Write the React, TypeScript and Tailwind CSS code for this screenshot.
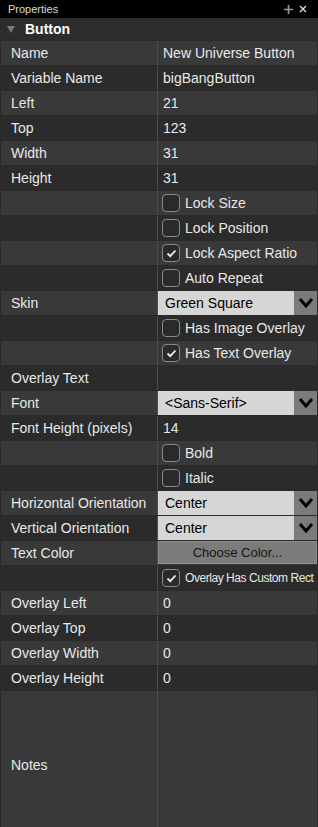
import React from 'react'

type Row =
  | { kind: 'text'; label: string; value?: string }
  | { kind: 'check'; label?: string; text: string; checked: boolean; small?: boolean }
  | { kind: 'select'; label: string; value: string }
  | { kind: 'button'; label: string; value: string }

const rows: Row[] = [
  { kind: 'text', label: 'Name', value: 'New Universe Button' },
  { kind: 'text', label: 'Variable Name', value: 'bigBangButton' },
  { kind: 'text', label: 'Left', value: '21' },
  { kind: 'text', label: 'Top', value: '123' },
  { kind: 'text', label: 'Width', value: '31' },
  { kind: 'text', label: 'Height', value: '31' },
  { kind: 'check', text: 'Lock Size', checked: false },
  { kind: 'check', text: 'Lock Position', checked: false },
  { kind: 'check', text: 'Lock Aspect Ratio', checked: true },
  { kind: 'check', text: 'Auto Repeat', checked: false },
  { kind: 'select', label: 'Skin', value: 'Green Square' },
  { kind: 'check', text: 'Has Image Overlay', checked: false },
  { kind: 'check', text: 'Has Text Overlay', checked: true },
  { kind: 'text', label: 'Overlay Text' },
  { kind: 'select', label: 'Font', value: '<Sans-Serif>' },
  { kind: 'text', label: 'Font Height (pixels)', value: '14' },
  { kind: 'check', text: 'Bold', checked: false },
  { kind: 'check', text: 'Italic', checked: false },
  { kind: 'select', label: 'Horizontal Orientation', value: 'Center' },
  { kind: 'select', label: 'Vertical Orientation', value: 'Center' },
  { kind: 'button', label: 'Text Color', value: 'Choose Color...' },
  { kind: 'check', text: 'Overlay Has Custom Rect', checked: true, small: true },
  { kind: 'text', label: 'Overlay Left', value: '0' },
  { kind: 'text', label: 'Overlay Top', value: '0' },
  { kind: 'text', label: 'Overlay Width', value: '0' },
  { kind: 'text', label: 'Overlay Height', value: '0' },
]

function Chevron() {
  return (
    <svg width="16" height="12" viewBox="0 0 16 12">
      <path d="M2 2 L8 9 L14 2" fill="none" stroke="#000" strokeWidth="3" />
    </svg>
  )
}

function Checkbox({ checked }: { checked: boolean }) {
  return (
    <div className="w-[18px] h-[18px] rounded-[4px] border border-[#8a8a8a] bg-[#2a2a2a] flex items-center justify-center shrink-0">
      {checked && (
        <svg width="11" height="9" viewBox="0 0 11 9">
          <path d="M1.5 4.5 L4.2 7.2 L9.5 1.5" fill="none" stroke="#f0f0f0" strokeWidth="1.8" />
        </svg>
      )}
    </div>
  )
}

function ValueCell({ row }: { row: Row }) {
  if (row.kind === 'select') {
    return (
      <div className="flex h-full w-full">
        <div className="flex-1 bg-[#d6d6d6] text-black flex items-center pl-[7px] pt-[1px]">{row.value}</div>
        <div className="w-[23px] bg-[#7b7b7b] flex items-center justify-center">
          <Chevron />
        </div>
      </div>
    )
  }
  if (row.kind === 'button') {
    return (
      <div className="h-[23px] w-full bg-[#7b7b7b] border border-[#8c8c8c] text-[#151515] text-[13px] flex items-center justify-center">
        {row.value}
      </div>
    )
  }
  if (row.kind === 'check') {
    return (
      <div className="flex items-center h-full pl-[4px] gap-[5px]">
        <Checkbox checked={row.checked} />
        <span className={row.small ? 'text-[12px] tracking-[-0.45px]' : 'pt-[1px]'}>{row.text}</span>
      </div>
    )
  }
  return <div className="flex items-center h-full pl-[5px] pt-[1px]">{row.value}</div>
}

export default function App() {
  return (
    <div
      className="w-[318px] h-[827px] bg-[#2a2a2a] text-[#e8e8e8] text-[14px] overflow-hidden flex flex-col"
      style={{ fontFamily: '"Liberation Sans", Arial, sans-serif' }}
    >
      <div className="h-[18px] bg-black flex items-center justify-between pl-[8px] pr-[11px] shrink-0">
        <span className="text-[11px] text-[#dcdcdc]">Properties</span>
        <div className="flex items-center gap-[6px]">
          <svg width="9" height="9" viewBox="0 0 9 9">
            <path d="M4.5 0 V9 M0 4.5 H9" stroke="#9a9a9a" strokeWidth="1.6" />
          </svg>
          <svg width="8" height="8" viewBox="0 0 8 8">
            <path d="M1 1 L7 7 M7 1 L1 7" stroke="#e0e0e0" strokeWidth="1.4" />
          </svg>
        </div>
      </div>

      <div className="h-[22px] bg-[#2c2c2c] flex items-center pl-[7px] shrink-0">
        <svg width="8" height="8" viewBox="0 0 8 8">
          <path d="M0 1 L8 1 L4 8 Z" fill="#7a7a7a" />
        </svg>
        <span className="ml-[10px] font-bold text-white pt-[1px]">Button</span>
      </div>

      {rows.map((row, i) => {
        const light = i % 2 === 0
        const bg = light ? 'bg-[#393939]' : 'bg-[#2b2b2b]'
        return (
          <div key={i} className="h-[25px] flex pt-[1px] shrink-0">
            <div className={`w-[156px] ml-[1px] ${bg} flex items-center pl-[10px] pt-[1px] whitespace-nowrap`}>
              {'label' in row ? row.label : ''}
            </div>
            <div className="w-[1px] bg-[#4f4f4f]" />
            <div className={`flex-1 ${bg} whitespace-nowrap min-w-0 overflow-hidden`}>
              <ValueCell row={row} />
            </div>
            <div className="w-[1px]" />
          </div>
        )
      })}

      <div className="flex-1 flex pt-[1px]">
        <div className="w-[156px] ml-[1px] bg-[#393939] flex items-center pl-[10px] pt-[12px]">Notes</div>
        <div className="w-[1px] bg-[#4f4f4f]" />
        <div className="flex-1 bg-[#393939]" />
        <div className="w-[1px]" />
      </div>
    </div>
  )
}
